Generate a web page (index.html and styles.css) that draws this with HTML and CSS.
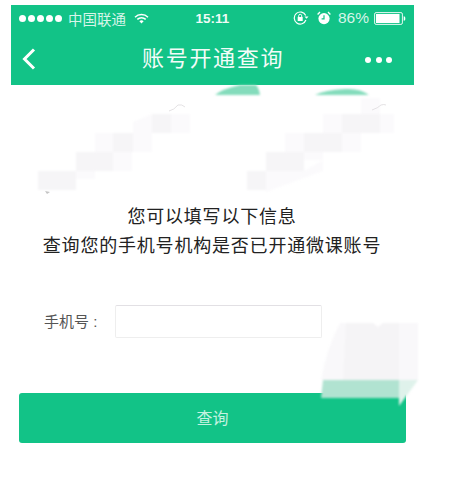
FILE: index.html
```html
<!DOCTYPE html>
<html lang="zh">
<head>
<meta charset="utf-8">
<title>账号开通查询</title>
<link rel="stylesheet" href="styles.css">
</head>
<body>
<div class="page">
  <header class="head">
    <div class="status">
      <div class="status-left">
        <span class="dots"><i></i><i></i><i></i><i></i><i></i></span>
        <span class="carrier">中国联通</span>
        <svg class="wifi" width="15" height="11" viewBox="0 0 15 11"><path d="M1 4.2a9.2 9.2 0 0 1 13 0M3.3 6.4a6 6 0 0 1 8.4 0" fill="none" stroke="#fff" stroke-width="1.5"/><path d="M5.4 8.2a3 3 0 0 1 4.2 0L7.5 10.4z" fill="#fff"/></svg>
      </div>
      <span class="time">15:11</span>
      <div class="status-right">
        <svg width="16" height="14" viewBox="0 0 16 14"><path d="M12.7 4.5A6 6 0 1 0 12.9 9" fill="none" stroke="#fff" stroke-width="1.2"/><path d="M11.5 5.5h4l-2 2.2z" fill="#fff"/><rect x="4.7" y="6" width="5" height="4" fill="#fff"/><path d="M5.7 6V4.8a1.5 1.5 0 0 1 3 0V6" fill="none" stroke="#fff"/></svg>
        <svg class="alarm" width="14" height="14" viewBox="0 0 14 14"><circle cx="7" cy="7.6" r="5.6" fill="#fff"/><path d="M7 4.2v3.6H4.6" fill="none" stroke="#12c387" stroke-width="1.2"/><path d="M.6 3.4 3 1.1M13.4 3.4 11 1.1" stroke="#fff" stroke-width="1.4"/></svg>
        <span class="percent">86%</span>
        <svg width="32" height="13" viewBox="0 0 32 13"><rect x=".6" y=".6" width="27.8" height="11.8" rx="1.5" fill="none" stroke="#fff" stroke-width=".9"/><rect x="2" y="2" width="23.5" height="9" fill="#fff"/><path d="M29.7 4.2c1.3 0 1.6 1 1.6 2.3s-.3 2.3-1.6 2.3z" fill="#fff"/></svg>
      </div>
    </div>
    <nav class="nav">
      <svg class="back" width="16" height="24" viewBox="0 0 16 24"><path d="M13 2.5 3.5 12 13 21.5" fill="none" stroke="#fff" stroke-width="3"/></svg>
      <h1 class="title">账号开通查询</h1>
      <span class="more"><i></i><i></i><i></i></span>
    </nav>
  </header>

  <main class="content">
    <p class="intro">您可以填写以下信息<br>查询您的手机号机构是否已开通微课账号</p>
    <div class="field">
      <label class="label" for="phone">手机号 :</label>
      <input class="input" id="phone" type="text">
    </div>
    <button class="submit" type="button">查询</button>
  </main>

  <svg class="smudge" width="453" height="477" viewBox="0 0 453 477" aria-hidden="true">
    <g class="soft">
      <path d="M215 95Q222 89 240 85H256Q259 88 260 95Z" fill="#84dcbc"/>
      <path d="M315 95Q325 90 345 89Q360 88 369 95Z" fill="#84dcbc"/>
      <g fill="#fbfafc">
        <rect x="95" y="133" width="18" height="19"/>
        <rect x="133" y="133" width="19" height="19"/>
        <path d="M133 133V122L152 114V133Z"/>
        <rect x="171" y="114" width="19" height="19"/>
        <rect x="113" y="152" width="19" height="19"/>
        <rect x="76" y="171" width="19" height="8"/>
        <rect x="323" y="114" width="19" height="19"/>
        <rect x="342" y="133" width="19" height="19"/>
        <rect x="361" y="98" width="19" height="16"/>
        <rect x="380" y="114" width="14" height="19"/>
        <rect x="285" y="133" width="19" height="19"/>
        <path d="M266 171H304L323 160V171L266 192Z"/>
        <path d="M323 152H304V160H323Z"/>
      </g>
      <g fill="#f6f5f7">
        <rect x="38" y="171" width="38" height="19"/>
        <rect x="76" y="152" width="37" height="19"/>
        <rect x="113" y="133" width="20" height="19"/>
        <rect x="152" y="114" width="19" height="19"/>
        <rect x="247" y="171" width="19" height="19"/>
        <rect x="266" y="152" width="38" height="19"/>
        <rect x="304" y="133" width="38" height="19"/>
        <rect x="342" y="114" width="38" height="19"/>
      </g>
      <path d="M340 323H373L378 327 383 323H418V380H321Q326 350 340 323Z" fill="#f9f8fa"/>
      <path d="M346 323H373L378 327 383 323H399V380H343Z" fill="#f5f4f6"/>
      <path d="M323 380H399V398H321Z" fill="#b1e3d1"/>
      <path d="M399 380H418L399 406Z" fill="#dff2eb"/>
    </g>
    <path d="M169 111Q174 110 178 105Q182 104 185 107M372 110Q378 108 381 105Q384 104 386 105" fill="none" stroke="#d8d6d8" stroke-width=".7"/>
    <path d="M45 191 50 192 47 194Z" fill="#c4c4c4"/>
  </svg>
</div>
</body>
</html>
```
FILE: styles.css
```css
* { box-sizing: border-box; }
html, body { margin: 0; padding: 0; background: #fff; }
body { font-family: "Liberation Sans", "Noto Sans CJK SC", sans-serif; }
.page { position: relative; width: 453px; height: 477px; overflow: hidden; padding: 5px 0 0 11px; }
.head { width: 403px; height: 80px; background: #12c387; color: #fff; }
.status { display: flex; align-items: center; justify-content: space-between; height: 26px; padding: 0 8px; font-size: 14px; color: #d6f5e9; }
.status-left, .status-right { display: flex; align-items: center; width: 150px; }
.status-right { justify-content: flex-end; gap: 8px; }
.dots { display: flex; gap: 2px; margin-right: 6px; }
.dots i { display: block; width: 7px; height: 7px; border-radius: 50%; background: #fff; }
.carrier { font-size: 14.5px; margin-right: 8px; }
.time { font-weight: 700; font-size: 13.5px; color: #eefbf6; }
.percent { font-size: 15.5px; margin-left: -1px; margin-right: -3px; }
.nav { position: relative; display: flex; align-items: center; justify-content: space-between; height: 54px; padding: 0 22px 4px 10px; }
.back { margin-top: 5px; }
.title { margin: 0; font-size: 22px; font-weight: 400; letter-spacing: 1.7px; position: absolute; left: 131px; color: #f2fcf8; }
.more { display: flex; gap: 4.5px; margin-top: 8px; }
.more i { display: block; width: 6px; height: 6px; border-radius: 50%; background: #fff; }
.content { display: flex; flex-direction: column; padding: 0 8px; }
.intro { margin: 118px 0 0; padding-right: 40px; text-align: center; font-size: 18px; letter-spacing: .8px; line-height: 29px; color: #222; }
.field { display: flex; align-items: center; margin-top: 44px; padding-left: 25px; }
.label { width: 71px; padding-bottom: 3px; font-size: 15px; color: #555; }
.input { width: 207px; height: 33px; border: 1px solid #eeeeee; border-top-color: #e2e0e4; border-radius: 2px; background: #fff; }
.submit { width: 387px; height: 50px; margin-top: 55px; padding: 0 0 2px; border: 0; border-radius: 3px; background: #12c387; color: #c4f2e0; font-family: inherit; font-size: 16px; }
.smudge { position: absolute; left: 0; top: 0; pointer-events: none; }
.soft { filter: blur(1px); }
```
